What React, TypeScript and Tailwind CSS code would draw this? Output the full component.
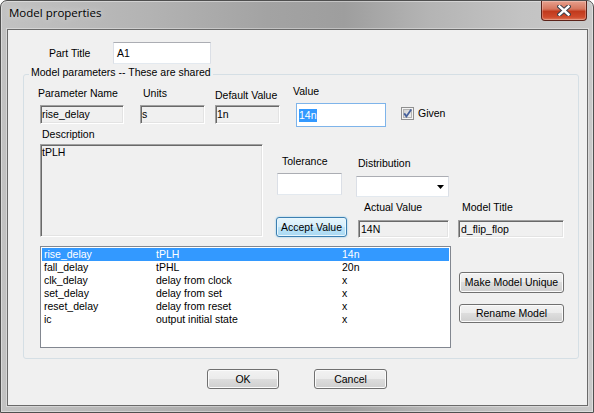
import React from 'react';

const params = [
  ['rise_delay', 'tPLH', '14n'],
  ['fall_delay', 'tPHL', '20n'],
  ['clk_delay', 'delay from clock', 'x'],
  ['set_delay', 'delay from set', 'x'],
  ['reset_delay', 'delay from reset', 'x'],
  ['ic', 'output initial state', 'x'],
];

const sunken =
  'flex items-center whitespace-nowrap bg-[#f0f0f0] border border-[#a0a0a0] border-r-white border-b-white shadow-[inset_1px_1px_0_#696969,inset_-1px_-1px_0_#e3e3e3]';

const textbox = 'bg-white border border-[#abadb3] border-b-[#e3e9ef] border-x-[#dbdfe6]';

const btn =
  'flex items-center justify-center whitespace-nowrap rounded-[3px] border border-[#707070] bg-[linear-gradient(#f2f2f2_0%,#ebebeb_50%,#dddddd_50%,#cfcfcf_100%)] shadow-[inset_0_0_0_1px_#fbfbfb]';

const CloseGlyph = () => (
  <svg width="14" height="11" viewBox="0 0 14 11">
    <path d="M2.5 1.5 L11.5 9.5 M11.5 1.5 L2.5 9.5" stroke="#3b3f4a" strokeWidth="4.4" strokeLinecap="square" />
    <path d="M2.5 1.5 L11.5 9.5 M11.5 1.5 L2.5 9.5" stroke="#ffffff" strokeWidth="2.4" strokeLinecap="square" />
  </svg>
);

const CheckBox = () => (
  <svg width="13" height="13" viewBox="0 0 13 13">
    <defs>
      <linearGradient id="cbg" x1="0" y1="0" x2="1" y2="1">
        <stop offset="0" stopColor="#cfcfcf" />
        <stop offset="1" stopColor="#f2f2f2" />
      </linearGradient>
    </defs>
    <rect x="0.5" y="0.5" width="12" height="12" fill="#f4f4f4" stroke="#8f8f8f" />
    <rect x="2.5" y="2.5" width="8" height="8" fill="url(#cbg)" stroke="#b3b3b3" />
    <path d="M3.2 6.4 L5.4 9.4 L10.2 2.6" stroke="#46609b" strokeWidth="1.8" fill="none" />
  </svg>
);

export default function App() {
  return (
    <div className="w-[594px] h-[413px] text-[10.5px] leading-[13px] text-black font-['Liberation_Sans',Arial,sans-serif]">
      <div className="flex h-full flex-col rounded-t-[7px] border border-[#4f4f4f] bg-[linear-gradient(90deg,#c2c2c2_0%,#b3b3b3_25%,#a3a3a3_45%,#9e9e9e_58%,#b4b4b4_72%,#c3c3c3_88%,#c8c8c8_100%)] shadow-[inset_0_0_0_1px_rgba(255,255,255,0.4)]">
        {/* title bar */}
        <div className="flex h-[28px] shrink-0 items-start">
          <span className="ml-[8px] mt-[4px] font-['Open_Sans',sans-serif] text-[11.5px] leading-[16px] text-black [text-shadow:0_0_6px_rgba(255,255,255,0.7)]">
            Model properties
          </span>
          <div className="ml-auto mr-[6px] flex h-[20px] w-[46px] items-center justify-center rounded-b-[4px] border border-t-0 border-[#5b2219] bg-[linear-gradient(#e7a08d_0%,#d6765e_42%,#c13a1d_55%,#cf4b2c_85%,#e07a5e_100%)] shadow-[inset_0_0_0_1px_rgba(255,255,255,0.25)]">
            <CloseGlyph />
          </div>
        </div>

        {/* client area */}
        <div className="mb-[6px] ml-[6px] mr-[5px] flex flex-1 flex-col border border-[#6a6a6a] bg-[#f0f0f0] shadow-[0_0_0_1px_rgba(255,255,255,0.35)]">
          <div className="flex items-center pl-[41px] pt-[12px]">
            <span className="w-[64px] whitespace-nowrap">Part Title</span>
            <div className={`${textbox} flex h-[22px] w-[98px] items-center pl-[3px]`}>A1</div>
          </div>

          {/* group box */}
          <div className="relative ml-[15px] mr-[8px] mt-[10px] h-[285px] rounded-[3px] border border-[#d5dfe5]">
            <span className="absolute -top-[9px] left-[5px] whitespace-nowrap bg-[#f0f0f0] px-[2px]">
              Model parameters -- These are shared
            </span>

            <div className="pl-[16px] pt-[10px]">
              {/* row A */}
              <div className="flex items-start">
                <div className="flex w-[84px] flex-col">
                  <span className="-ml-[2px] mt-[2px] whitespace-nowrap">Parameter Name</span>
                  <div className={`${sunken} mt-[5px] h-[19px] pl-[1px]`}>rise_delay</div>
                </div>
                <div className="ml-[16px] flex w-[65px] flex-col">
                  <span className="ml-[3px] mt-[2px]">Units</span>
                  <div className={`${sunken} mt-[5px] h-[19px] pl-[1px]`}>s</div>
                </div>
                <div className="ml-[10px] flex w-[65px] flex-col">
                  <span className="mt-[4px] whitespace-nowrap">Default Value</span>
                  <div className={`${sunken} mt-[3px] h-[19px] pl-[1px]`}>1n</div>
                </div>
                <div className="ml-[16px] flex w-[90px] flex-col">
                  <span className="-ml-[3px]">Value</span>
                  <div className="mt-[5px] flex h-[24px] items-center border border-[#7eb4ea] bg-white pl-[2px]">
                    <span className="bg-[#3399ff] text-white">14n</span>
                  </div>
                </div>
                <div className="ml-[15px] mt-[22px] flex items-center gap-[4px]">
                  <CheckBox />
                  <span>Given</span>
                </div>
              </div>

              {/* row B */}
              <div className="flex items-start">
                <div className="flex w-[223px] flex-col">
                  <span className="ml-[2px] mt-[1px]">Description</span>
                  <div className={`${sunken} mt-[3px] h-[93px] !items-start pl-[1px] pt-[1px]`}>tPLH</div>
                </div>
                <div className="ml-[14px] flex flex-col">
                  <div className="mt-[28px] flex items-start">
                    <div className="flex w-[65px] flex-col">
                      <span className="ml-[5px]">Tolerance</span>
                      <div className={`${textbox} mt-[5px] h-[22px]`} />
                    </div>
                    <div className="ml-[14px] flex w-[93px] flex-col">
                      <span className="ml-[2px] mt-[2px]">Distribution</span>
                      <div className={`${textbox} mt-[6px] flex h-[21px] items-center justify-end pr-[4px]`}>
                        <svg width="7" height="4" viewBox="0 0 7 4">
                          <polygon points="0,0 7,0 3.5,4" fill="#000" />
                        </svg>
                      </div>
                    </div>
                  </div>
                  <div className="mt-[4px] flex items-start">
                    <button className="-ml-[1px] mt-[16px] flex h-[20px] w-[71px] items-center justify-center whitespace-nowrap rounded-[3px] border border-[#3c7fb1] bg-[linear-gradient(#e6f5fc_0%,#d6eefb_50%,#bee4f8_50%,#a9d9f3_100%)] shadow-[inset_0_0_0_1px_#e8f6fd,0_0_2px_#7fc4ec]">
                      Accept Value
                    </button>
                    <div className="ml-[11px] flex w-[91px] flex-col">
                      <span className="ml-[6px] whitespace-nowrap">Actual Value</span>
                      <div className={`${sunken} mt-[6px] h-[18px] pl-[2px]`}>14N</div>
                    </div>
                    <div className="ml-[9px] flex w-[106px] flex-col">
                      <span className="ml-[4px] whitespace-nowrap">Model Title</span>
                      <div className={`${sunken} mt-[6px] h-[18px] pl-[2px]`}>d_flip_flop</div>
                    </div>
                  </div>
                </div>
              </div>

              {/* row C */}
              <div className="mt-[8px] flex items-start">
                <div className="h-[102px] w-[411px] border border-[#828790] bg-white p-[1px]">
                  {params.map(([name, desc, val], i) => (
                    <div
                      key={name}
                      className={`flex h-[13px] whitespace-nowrap pl-[2px] ${i === 0 ? 'bg-[#3399ff] text-white' : ''}`}
                    >
                      <span className="w-[112px]">{name}</span>
                      <span className="w-[186px]">{desc}</span>
                      <span>{val}</span>
                    </div>
                  ))}
                </div>
                <div className="ml-[8px] flex w-[105px] flex-col">
                  <button className={`${btn} mt-[26px] h-[21px]`}>Make Model Unique</button>
                  <button className={`${btn} mt-[11px] h-[19px]`}>Rename Model</button>
                </div>
              </div>
            </div>
          </div>

          <div className="mt-[10px] flex pl-[199px]">
            <button className={`${btn} h-[20px] w-[72px]`}>OK</button>
            <button className={`${btn} ml-[35px] h-[20px] w-[73px]`}>Cancel</button>
          </div>
        </div>
      </div>
    </div>
  );
}
